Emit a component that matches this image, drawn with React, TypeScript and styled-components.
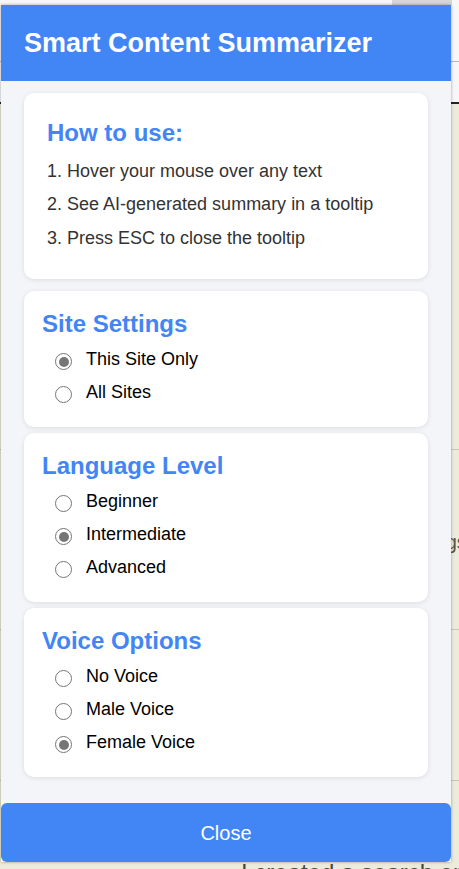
import React from "react";
import styled, { createGlobalStyle } from "styled-components";

const Global = createGlobalStyle`
  html, body { margin: 0; padding: 0; }
  body {
    width: 459px;
    height: 869px;
    overflow: hidden;
    font-family: "Liberation Sans", Arial, sans-serif;
    background: #ffffff;
  }
`;

const BLUE = "#4285f4";

/* ---------- background web page (mostly hidden) ---------- */
const Page = styled.div`
  position: relative;
  width: 459px;
  height: 869px;
  overflow: hidden;
  background: #ecebdc;
  display: flex;
  flex-direction: column;
`;

const PageTop = styled.div`
  height: 61px;
  flex: none;
  background: #f7f7f7;
  border-bottom: 1px solid #b9b9b9;
  display: flex;
  justify-content: flex-end;
`;

const TopBlock = styled.div`
  width: 60px;
  height: 5px;
  background: #d6d6d6;
  margin-right: 7px;
`;

const PageNav = styled.div`
  height: 40px;
  flex: none;
  background: #f7f7f7;
  border-bottom: 2px solid #222;
`;

const PageSection = styled.div<{ $h: number; $pad: number }>`
  height: ${(p) => p.$h}px;
  flex: none;
  border-bottom: 1px solid #c9c8b8;
  padding: ${(p) => p.$pad}px 0 0 330px;
  box-sizing: border-box;
  color: #5a5548;
  font-size: 20px;
  line-height: 32px;
  white-space: nowrap;
`;

const PageText = styled.div`
  padding: 0 0 0 241px;
  color: #4a463c;
  font-size: 24px;
  white-space: nowrap;
  margin-top: 78px;
`;

/* ---------- popup ---------- */
const Popup = styled.div`
  position: absolute;
  top: 5px;
  left: 1px;
  width: 450px;
  height: 857px;
  display: flex;
  flex-direction: column;
  background: #f4f5f9;
  box-shadow: 0 0 3px rgba(0, 0, 0, 0.35);
`;

const Header = styled.header`
  flex: none;
  height: 76px;
  box-sizing: border-box;
  padding: 22px 23px 22px;
  background: ${BLUE};
  color: #fff;
  font-size: 27px;
  line-height: 32px;
  font-weight: 700;
`;

const Body = styled.main`
  flex: 1;
  display: flex;
  flex-direction: column;
  gap: 6px;
  padding: 12px 23px 0;
`;

const Card = styled.section<{ $intro?: boolean }>`
  background: #fff;
  border-radius: 10px;
  box-shadow: 0 1px 5px rgba(0, 0, 0, 0.1);
  padding: ${(p) => (p.$intro ? "26px 23px 24px" : "19px 18px 20px")};
  margin-bottom: ${(p) => (p.$intro ? "6px" : "0")};
`;

const Heading = styled.h3<{ $gap: number }>`
  margin: 0 0 ${(p) => p.$gap}px;
  color: ${BLUE};
  font-size: 24px;
  line-height: 28px;
  font-weight: 700;
`;

const Steps = styled.ol`
  margin: 0;
  padding: 3px 0 0;
  list-style: none;
`;

const Step = styled.li`
  color: #333;
  font-size: 18px;
  line-height: 33.3px;
`;

const Option = styled.label`
  display: flex;
  align-items: center;
  box-sizing: border-box;
  height: 33px;
  padding: 5px 0 0 13px;
  color: #000;
  font-size: 18px;
  cursor: pointer;
`;

const Radio = styled.span<{ $checked: boolean }>`
  flex: none;
  box-sizing: border-box;
  width: 17px;
  height: 17px;
  margin: 4px 14px 0 0;
  border-radius: 50%;
  border: ${(p) => (p.$checked ? "1.7px" : "1.3px")} solid #767676;
  background: #fff;
  display: flex;
  align-items: center;
  justify-content: center;

  &::after {
    content: "";
    width: 10px;
    height: 10px;
    border-radius: 50%;
    background: #767676;
    display: ${(p) => (p.$checked ? "block" : "none")};
  }
`;

const CloseButton = styled.button`
  flex: none;
  height: 59px;
  width: 100%;
  box-sizing: border-box;
  padding-top: 2px;
  border: none;
  border-radius: 6px;
  background: ${BLUE};
  color: #fff;
  font-family: "Liberation Sans", Arial, sans-serif;
  font-size: 20px;
  cursor: pointer;
`;

type Group = { title: string; options: string[]; selected: number };

const groups: Group[] = [
  { title: "Site Settings", options: ["This Site Only", "All Sites"], selected: 0 },
  { title: "Language Level", options: ["Beginner", "Intermediate", "Advanced"], selected: 1 },
  { title: "Voice Options", options: ["No Voice", "Male Voice", "Female Voice"], selected: 2 },
];

const steps = [
  "1. Hover your mouse over any text",
  "2. See AI-generated summary in a tooltip",
  "3. Press ESC to close the tooltip",
];

export default function App() {
  return (
    <>
      <Global />
      <Page>
        <PageTop>
          <TopBlock />
        </PageTop>
        <PageNav />
        <PageSection $h={346} $pad={221}>
          <div>Bookmarks</div>
          <div>See more</div>
        </PageSection>
        <PageSection $h={180} $pad={76}>
          <div>Learning things</div>
          <div>See the page</div>
        </PageSection>
        <PageSection $h={151} $pad={103}>
          <div>Posts</div>
        </PageSection>
        <PageText>I created a search engine</PageText>

        <Popup>
          <Header>Smart Content Summarizer</Header>
          <Body>
            <Card $intro>
              <Heading $gap={5}>How to use:</Heading>
              <Steps>
                {steps.map((s) => (
                  <Step key={s}>{s}</Step>
                ))}
              </Steps>
            </Card>
            {groups.map((g) => (
              <Card key={g.title}>
                <Heading $gap={3}>{g.title}</Heading>
                {g.options.map((o, i) => (
                  <Option key={o}>
                    <Radio $checked={i === g.selected} />
                    {o}
                  </Option>
                ))}
              </Card>
            ))}
          </Body>
          <CloseButton>Close</CloseButton>
        </Popup>
      </Page>
    </>
  );
}
